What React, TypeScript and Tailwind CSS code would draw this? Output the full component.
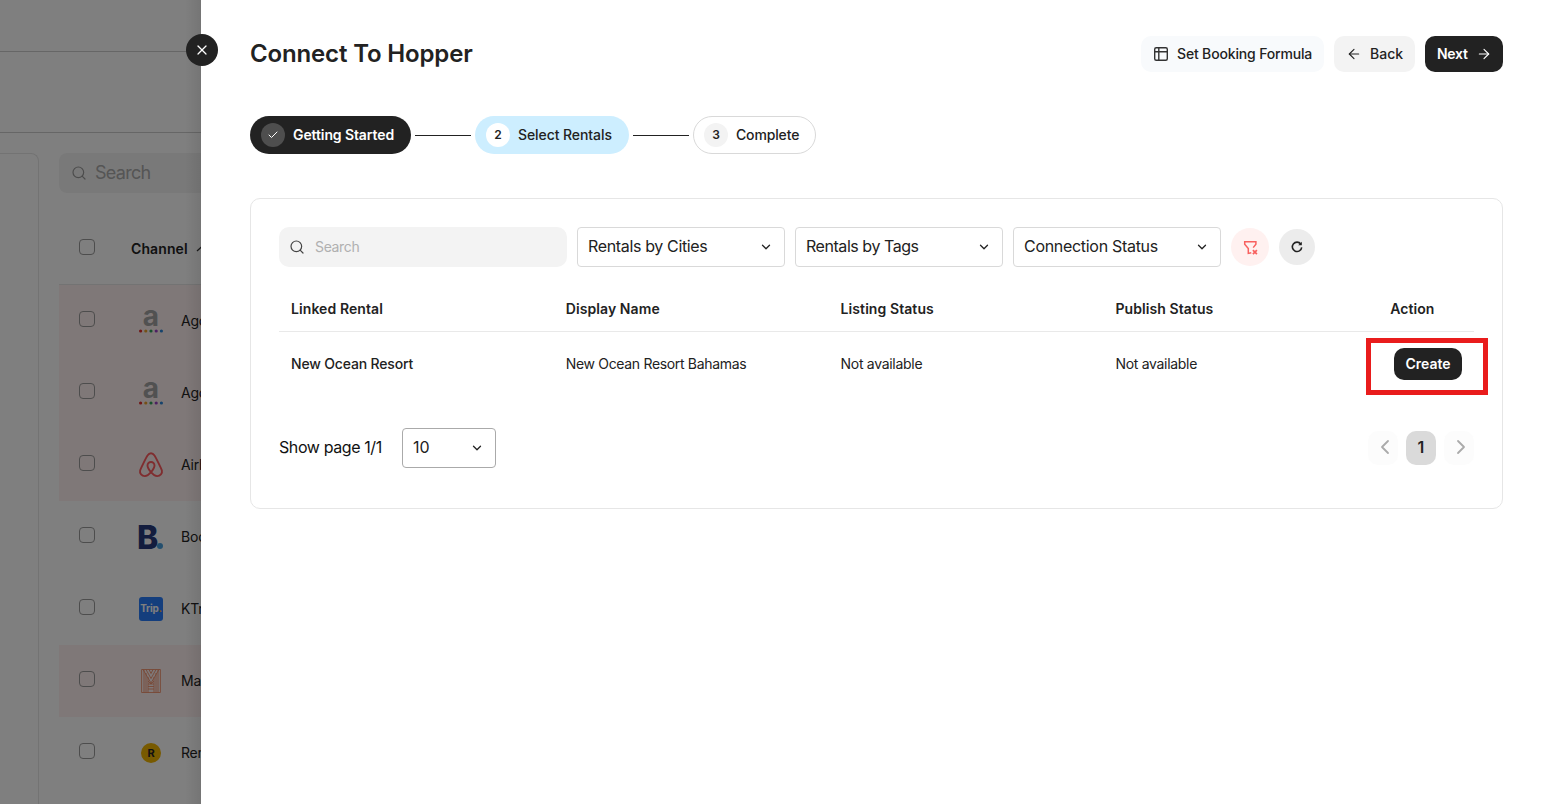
import type { ReactNode } from "react";
import { ArrowLeft, ArrowRight, Check, ChevronDown, ChevronLeft, ChevronRight, Search, X } from "lucide-react";

function AgodaLogo() {
  return (
    <span className="flex h-[26px] w-[26px] flex-col items-center justify-between pb-[1px]">
      <span className="-mt-[5px] h-[26px] text-[28px] leading-[26px] font-bold text-[#a3a3a3]">a</span>
      <svg width="26" height="4" viewBox="0 0 26 4" className="-mt-1 shrink-0">
        <circle cx="2.600" cy="2" r="1.600" fill="#e12d2d" />
        <circle cx="7.800" cy="2" r="1.600" fill="#e8a02c" />
        <circle cx="13" cy="2" r="1.600" fill="#2fa55a" />
        <circle cx="18.200" cy="2" r="1.600" fill="#9a3fc4" />
        <circle cx="23.400" cy="2" r="1.600" fill="#2d87d8" />
      </svg>
    </span>
  );
}

function AirbnbLogo() {
  return (
    <svg width="26" height="26" viewBox="0 0 26 26" fill="none" stroke="#ff5a5f" strokeWidth="1.900" strokeLinejoin="round">
      <path d="M13 20.200c-2.300-2.800-3.500-4.800-3.500-6.700a3.500 3.500 0 0 1 7 0c0 1.900-1.200 3.900-3.500 6.700-2.100 2.500-4 3.900-6.200 3.900-3 0-5.400-2.500-4.700-5.500.3-1.200 5.500-12.200 7.600-15.300.9-1.500 1.800-2.100 3.300-2.100s2.400.6 3.300 2.100c2.100 3.100 7.300 14.100 7.600 15.300.7 3-1.700 5.500-4.700 5.500-2.200 0-4.100-1.400-6.200-3.900z" />
    </svg>
  );
}

function BookingLogo() {
  return (
    <span className="flex h-[26px] w-[26px] items-end">
      <span className="-mb-[5px] -ml-px h-[34px] w-[20px] text-[32px] leading-[34px] font-extrabold text-[#273b7d]">B</span>
      <span className="mb-[1px] h-[6px] w-[6px] shrink-0 rounded-full bg-[#499fdd]" />
    </span>
  );
}

function TripLogo() {
  return (
    <span className="flex h-6 w-6 items-center justify-center rounded-[3px] bg-[#287dfa] pb-px text-[10px] font-bold tracking-[-0.200px] text-white">
      Trip<span className="text-[#ffb400]">.</span>
    </span>
  );
}

function MarriottLogo() {
  return (
    <svg width="20" height="24" viewBox="0 0 20 24" fill="none" stroke="#f0906a" strokeWidth="0.900">
      <path d="M.6.5h18.800v23H.6zM3 1v22.500M5 4v19.500M7 8v15.500M13 8v15.500M15 4v19.500M17 1v22.500" />
      <path d="M2 .5l8 13.500L18 .5M5 .5l5 9 5-9M8 .5l2 4 2-4M7 15h6M7 17.500h6M7 20h6M7 12l3 3 3-3" />
    </svg>
  );
}

function RentalLogo() {
  return (
    <span className="flex h-5 w-5 items-center justify-center rounded-full bg-[#f0b400] text-[11px] font-bold text-[#222]">R</span>
  );
}

const channels: { name: string; logo: ReactNode; flagged: boolean }[] = [
  { name: "Agoda", logo: <AgodaLogo />, flagged: true },
  { name: "Agoda", logo: <AgodaLogo />, flagged: true },
  { name: "Airbnb", logo: <AirbnbLogo />, flagged: true },
  { name: "Booking", logo: <BookingLogo />, flagged: false },
  { name: "KTrip", logo: <TripLogo />, flagged: false },
  { name: "Marriott", logo: <MarriottLogo />, flagged: true },
  { name: "Rental", logo: <RentalLogo />, flagged: false },
];

function Checkbox() {
  return <span className="mb-1 h-4 w-4 shrink-0 rounded-[4px] border border-[#9a9a9a]" />;
}

function ChannelsPage() {
  return (
    <div className="relative flex h-full w-[201px] shrink-0 flex-col overflow-hidden bg-white">
      <div className="h-[52px] shrink-0 border-b border-[#ccc]" />
      <div className="h-[81px] shrink-0 border-b border-[#ccc]" />
      <div className="flex min-h-0 flex-1 pt-5">
        <div className="-ml-2 w-[47px] shrink-0 rounded-tr-lg border-t border-r border-[#e6e6e6]" />
        <div className="ml-5 flex w-[400px] shrink-0 flex-col">
          <div className="flex h-10 shrink-0 items-center gap-2 rounded-lg bg-[#f3f3f3] pl-3 text-[18px] text-[#aaa]">
            <Search className="h-4 w-4 text-[#999]" strokeWidth={1.800} />
            <span className="pb-0.5 tracking-[-0.700px]">Search</span>
          </div>
          <div className="flex h-[92px] shrink-0 items-center border-b border-[#e6e6e6] pt-5 pl-5">
            <Checkbox />
            <span className="ml-9 text-[14px] font-semibold tracking-[0.100px] text-[#222]">Channel</span>
            <svg width="12" height="8" viewBox="0 0 12 8" className="ml-2 shrink-0" fill="none" stroke="#333" strokeWidth="1.300"><path d="M1 6l5-4.500L11 6" /></svg>
          </div>
          {channels.map((c, i) => (
            <div key={i} className={`flex h-[72px] shrink-0 items-center pl-5 ${c.flagged ? "bg-[#fff1f0]" : ""}`}>
              <Checkbox />
              <span className="ml-[43px] flex w-[26px] justify-center">{c.logo}</span>
              <span className="ml-[17px] pb-px text-[14px] tracking-[-0.200px] text-[#222]">{c.name}</span>
            </div>
          ))}
        </div>
      </div>
      <div className="absolute inset-0 bg-black/50" />
      <div className="absolute inset-y-0 right-0 w-4 bg-linear-to-l from-black/8 to-transparent" />
    </div>
  );
}

function Select({ label, className }: { label: string; className: string }) {
  return (
    <div className={`flex h-10 items-center justify-between rounded-[4px] border pr-[11px] pl-[10px] text-[16px] text-[#222] ${className}`}>
      <span className="pb-0.5">{label}</span>
      <ChevronDown className="h-[14px] w-[14px]" strokeWidth={2.200} />
    </div>
  );
}

function FormulaIcon() {
  return (
    <svg width="16" height="16" viewBox="0 0 16 16" fill="none" stroke="#333" strokeWidth="1.400">
      <rect x="1.700" y="1.700" width="12.600" height="12.600" rx="1.500" />
      <path d="M5.800 1.700v12.600M1.700 5.800h12.600" />
    </svg>
  );
}

function ClearFilterIcon() {
  return (
    <svg width="16" height="16" viewBox="0 0 16 16" fill="none" stroke="#f8615f" strokeWidth="1.500" className="mt-0.5 ml-0.5">
      <path d="M10.200 7.600L12.900 4.200V1.700H1.700V4.200L5.300 8.600V13.400L8.300 12.700" />
      <path d="M9.900 10.100l4 4M13.900 10.100l-4 4" strokeWidth="1.700" />
    </svg>
  );
}

function ReloadIcon() {
  return (
    <svg width="14" height="14" viewBox="0 0 14 14" fill="none" stroke="#222" strokeWidth="1.600">
      <path d="M10.800 4A4.700 4.700 0 1 0 11.700 7.400" />
      <path d="M11.800 1.800v3.500H8.200z" fill="#222" stroke="none" />
    </svg>
  );
}

export default function App() {
  return (
    <div className="flex h-[804px] w-[1550px] overflow-hidden bg-white font-['Inter',sans-serif] text-[#222]">
      <ChannelsPage />
      <main className="relative flex flex-1 flex-col pt-9 pr-[47px] pl-[49px]">
        <button className="absolute top-[34px] -left-[15px] flex h-8 w-8 items-center justify-center rounded-full bg-[#222] text-white">
          <X className="h-4 w-4" strokeWidth={1.800} />
        </button>

        <header className="flex h-9 items-center justify-between">
          <h1 className="text-[24px] font-semibold tracking-[-0.150px]">Connect To Hopper</h1>
          <div className="flex gap-[10px] text-[14px] font-medium">
            <button className="flex h-9 w-[183px] items-center rounded-[10px] bg-[#f8fafc] pl-3">
              <FormulaIcon />
              <span className="ml-2 pb-0.5 tracking-[-0.160px] whitespace-nowrap">Set Booking Formula</span>
            </button>
            <button className="flex h-9 w-[81px] items-center rounded-[10px] bg-[#f3f3f3] pl-3">
              <ArrowLeft className="h-4 w-4" strokeWidth={1.700} />
              <span className="ml-2 pb-0.5">Back</span>
            </button>
            <button className="flex h-9 w-[78px] items-center rounded-[10px] bg-[#222] pl-3 font-semibold text-white">
              <span className="pb-0.5 tracking-[-0.300px]">Next</span>
              <ArrowRight className="ml-2 h-4 w-4" strokeWidth={1.700} />
            </button>
          </div>
        </header>

        <div className="mt-11 flex h-[38px] shrink-0 items-center gap-1 text-[14px] font-medium">
          <div className="flex h-[38px] w-[161px] items-center rounded-full bg-[#222] pl-[11px] font-semibold text-white">
            <span className="flex h-6 w-6 items-center justify-center rounded-full bg-[#4e4e4e]"><Check className="h-3 w-3" strokeWidth={2} /></span>
            <span className="ml-2 pb-0.5 tracking-[-0.100px] whitespace-nowrap">Getting Started</span>
          </div>
          <div className="h-px w-14 bg-[#222]" />
          <div className="flex h-[38px] w-[154px] items-center rounded-full bg-[#cdeeff] pl-[11px]">
            <span className="flex h-6 w-6 items-center justify-center rounded-full bg-white text-[12px] font-semibold">2</span>
            <span className="ml-2 pb-0.5 tracking-[-0.080px] whitespace-nowrap">Select Rentals</span>
          </div>
          <div className="h-px w-14 bg-[#222]" />
          <div className="flex h-[38px] w-[123px] items-center rounded-full border border-[#d9d9d9] pl-[10px]">
            <span className="flex h-6 w-6 items-center justify-center rounded-full bg-[#f3f3f3] text-[12px] font-semibold">3</span>
            <span className="ml-2 pb-0.5 tracking-[-0.150px]">Complete</span>
          </div>
        </div>

        <section className="mt-11 h-[311px] rounded-[10px] border border-[#e6e6e6] p-7">
          <div className="flex h-10 items-center gap-[10px]">
            <div className="flex h-10 w-[288px] items-center rounded-[10px] bg-[#f3f3f3] pl-[10px]">
              <Search className="h-4 w-4 text-[#444]" strokeWidth={1.800} />
              <span className="ml-[10px] pb-0.5 text-[14px] tracking-[-0.350px] text-[#b0b0b0]">Search</span>
            </div>
            <Select label="Rentals by Cities" className="w-[208px] border-[#d9d9d9] tracking-[-0.350px]" />
            <Select label="Rentals by Tags" className="w-[208px] border-[#d9d9d9] tracking-[-0.450px]" />
            <Select label="Connection Status" className="w-[208px] border-[#d9d9d9] tracking-[-0.300px]" />
            <button className="flex h-[38px] w-[38px] items-center justify-center rounded-full bg-[#fff1f0]"><ClearFilterIcon /></button>
            <button className="flex h-9 w-9 items-center justify-center rounded-full bg-[#ececec]"><ReloadIcon /></button>
          </div>

          <div className="mt-5 grid h-[45px] grid-cols-[repeat(4,274.800px)_1fr] items-center border-b border-[#e9e9e9] pb-0.5 text-[14px] font-semibold tracking-[0.080px]">
            <span className="pl-3">Linked Rental</span>
            <span className="pl-3">Display Name</span>
            <span className="pl-3">Listing Status</span>
            <span className="pl-3">Publish Status</span>
            <span className="pl-3">Action</span>
          </div>
          <div className="grid h-16 grid-cols-[repeat(4,274.800px)_1fr] items-center text-[14px]">
            <span className="pb-0.5 pl-3 font-medium tracking-[-0.170px]">New Ocean Resort</span>
            <span className="pb-0.5 pl-3 tracking-[-0.330px]">New Ocean Resort Bahamas</span>
            <span className="pb-0.5 pl-3 tracking-[-0.300px]">Not available</span>
            <span className="pb-0.5 pl-3 tracking-[-0.300px]">Not available</span>
            <div className="relative ml-[15.800px] h-8 w-[68px]">
              <button className="h-8 w-[68px] rounded-[10px] bg-[#222] pb-0.5 font-semibold text-white">Create</button>
              <div className="pointer-events-none absolute -top-[10px] -left-7 h-[57px] w-[122px] border-5 border-[#e91c1c]" />
            </div>
          </div>

          <div className="mt-8 flex h-10 items-center justify-between">
            <div className="flex items-center text-[16px] text-[#111]">
              <span className="w-[123px] pb-0.5 tracking-[-0.400px] whitespace-nowrap">Show page 1/1</span>
              <Select label="10" className="w-[94px] border-[#aaa]" />
            </div>
            <div className="flex items-center gap-2">
              <button className="flex h-[34px] w-[30px] items-center justify-center rounded-[10px] bg-[#fcfcfc] pb-0.5 pl-1 text-[#aaa]"><ChevronLeft className="h-6 w-6" strokeWidth={1.800} /></button>
              <button className="flex h-[34px] w-[30px] items-center justify-center rounded-[10px] bg-[#dadada] pb-0.5 text-[16px] font-semibold">1</button>
              <button className="flex h-[34px] w-[30px] items-center justify-center rounded-[10px] bg-[#fcfcfc] pb-0.5 pl-1 text-[#aaa]"><ChevronRight className="h-6 w-6" strokeWidth={1.800} /></button>
            </div>
          </div>
        </section>
      </main>
    </div>
  );
}
